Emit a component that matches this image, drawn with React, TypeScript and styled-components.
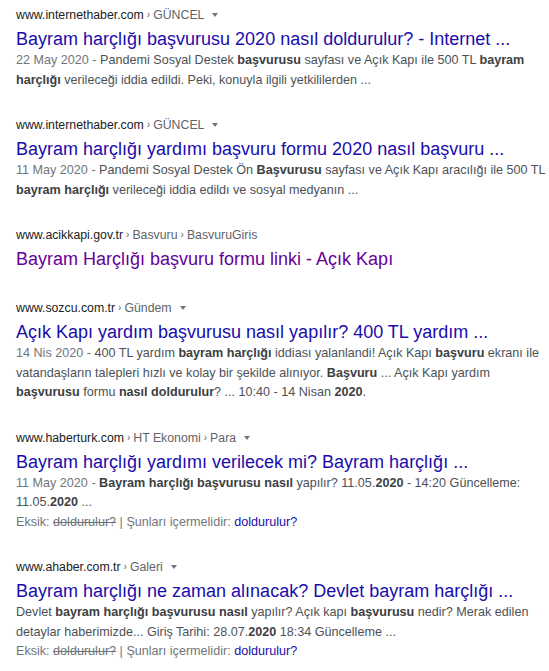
import React from 'react'
import styled, { createGlobalStyle } from 'styled-components'

const GlobalStyle = createGlobalStyle`
  body {
    margin: 0;
    background: #fff;
    font-family: 'Liberation Sans', Arial, sans-serif;
  }
`

type Piece = string | { b: string }

interface Result {
  site: string
  crumbs: string[]
  menu?: boolean
  title: string
  visited?: boolean
  date?: string
  snippet: Piece[][]
  missing?: boolean
}

const results: Result[] = [
  {
    site: 'www.internethaber.com',
    crumbs: ['GÜNCEL'],
    menu: true,
    title: 'Bayram harçlığı başvurusu 2020 nasıl doldurulur? - Internet ...',
    date: '22 May 2020',
    snippet: [
      ['Pandemi Sosyal Destek ', { b: 'başvurusu' }, ' sayfası ve Açık Kapı ile 500 TL ', { b: 'bayram' }],
      [{ b: 'harçlığı' }, ' verileceği iddia edildi. Peki, konuyla ilgili yetkililerden ...'],
    ],
  },
  {
    site: 'www.internethaber.com',
    crumbs: ['GÜNCEL'],
    menu: true,
    title: 'Bayram harçlığı yardımı başvuru formu 2020 nasıl başvuru ...',
    date: '11 May 2020',
    snippet: [
      ['Pandemi Sosyal Destek Ön ', { b: 'Başvurusu' }, ' sayfası ve Açık Kapı aracılığı ile 500 TL'],
      [{ b: 'bayram harçlığı' }, ' verileceği iddia edildı ve sosyal medyanın ...'],
    ],
  },
  {
    site: 'www.acikkapi.gov.tr',
    crumbs: ['Basvuru', 'BasvuruGiris'],
    title: 'Bayram Harçlığı başvuru formu linki - Açık Kapı',
    visited: true,
    snippet: [],
  },
  {
    site: 'www.sozcu.com.tr',
    crumbs: ['Gündem'],
    menu: true,
    title: 'Açık Kapı yardım başvurusu nasıl yapılır? 400 TL yardım ...',
    date: '14 Nis 2020',
    snippet: [
      ['400 TL yardım ', { b: 'bayram harçlığı' }, ' iddiası yalanlandi! Açık Kapı ', { b: 'başvuru' }, ' ekranı ile'],
      ['vatandaşların talepleri hızlı ve kolay bir şekilde alınıyor. ', { b: 'Başvuru' }, ' ... Açık Kapı yardım'],
      [{ b: 'başvurusu' }, ' formu ', { b: 'nasıl doldurulur' }, '? ... 10:40 - 14 Nisan ', { b: '2020' }, '.'],
    ],
  },
  {
    site: 'www.haberturk.com',
    crumbs: ['HT Ekonomi', 'Para'],
    menu: true,
    title: 'Bayram harçlığı yardımı verilecek mi? Bayram harçlığı ...',
    date: '11 May 2020',
    snippet: [
      [{ b: 'Bayram harçlığı başvurusu nasıl' }, ' yapılır? 11.05.', { b: '2020' }, ' - 14:20 Güncelleme:'],
      ['11.05.', { b: '2020' }, ' ...'],
    ],
    missing: true,
  },
  {
    site: 'www.ahaber.com.tr',
    crumbs: ['Galeri'],
    menu: true,
    title: 'Bayram harçlığı ne zaman alınacak? Devlet bayram harçlığı ...',
    snippet: [
      ['Devlet ', { b: 'bayram harçlığı başvurusu nasıl' }, ' yapılır? Açık kapı ', { b: 'başvurusu' }, ' nedir? Merak edilen'],
      ['detaylar haberimizde... Giriş Tarihi: 28.07.', { b: '2020' }, ' 18:34 Güncelleme ...'],
    ],
    missing: true,
  },
]

const List = styled.main`
  padding: 5px 16px 0;
  display: flex;
  flex-direction: column;
  gap: 25px;
`

const Item = styled.article<{ $bare?: boolean }>`
  display: flex;
  flex-direction: column;
  padding-bottom: ${p => (p.$bare ? '2px' : '0')};
`

const UrlLine = styled.div`
  display: flex;
  align-items: center;
  font-size: 12.3px;
  line-height: 20px;
  padding-bottom: 2px;
  color: #202124;
  white-space: nowrap;
`

const Crumb = styled.span`
  color: #5f6368;
`

const Sep = styled.span`
  color: #5f6368;
  margin: 0 3px;
  font-size: 10px;
`

const MenuArrow = styled.span`
  display: inline-block;
  margin-left: 8px;
  width: 0;
  height: 0;
  border-left: 3px solid transparent;
  border-right: 3px solid transparent;
  border-top: 4px solid #70757a;
`

const Title = styled.a<{ $visited?: boolean }>`
  font-size: 18px;
  line-height: 24px;
  color: ${p => (p.$visited ? '#660099' : '#1a0dab')};
  text-decoration: none;
  white-space: nowrap;
`

const Snippet = styled.div`
  font-size: 12.6px;
  line-height: 19.5px;
  color: #4d5156;
  white-space: nowrap;

  b {
    color: #3c4043;
    font-weight: bold;
  }
`

const DateText = styled.span`
  color: #70757a;
`

const Missing = styled.div`
  font-size: 12.6px;
  line-height: 19.5px;
  color: #70757a;
  white-space: nowrap;

  s {
    color: #70757a;
  }
`

const MissingLink = styled.a`
  color: #1a0dab;
  text-decoration: none;
`

const renderLine = (line: Piece[]) =>
  line.map((p, i) => (typeof p === 'string' ? <React.Fragment key={i}>{p}</React.Fragment> : <b key={i}>{p.b}</b>))

const App: React.FC = () => (
  <>
    <GlobalStyle />
    <List>
      {results.map((r, idx) => (
        <Item key={idx} $bare={r.snippet.length === 0}>
          <UrlLine>
            {r.site}
            {r.crumbs.map(c => (
              <React.Fragment key={c}>
                <Sep>›</Sep>
                <Crumb>{c}</Crumb>
              </React.Fragment>
            ))}
            {r.menu && <MenuArrow />}
          </UrlLine>
          <Title href='#' $visited={r.visited}>
            {r.title}
          </Title>
          {r.snippet.map((line, li) => (
            <Snippet key={li}>
              {li === 0 && r.date && <DateText>{r.date} - </DateText>}
              {renderLine(line)}
            </Snippet>
          ))}
          {r.missing && (
            <Missing>
              Eksik: <s>doldurulur?</s> | Şunları içermelidir: <MissingLink href='#'>doldurulur?</MissingLink>
            </Missing>
          )}
        </Item>
      ))}
    </List>
  </>
)

export default App
